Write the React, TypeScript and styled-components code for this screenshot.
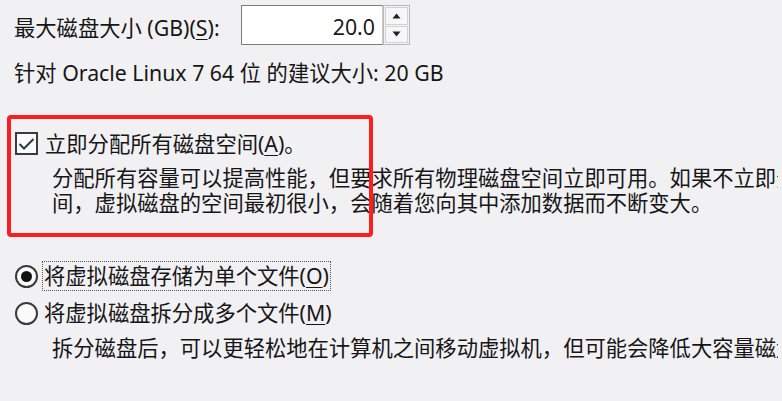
import React from 'react';
import styled, { createGlobalStyle } from 'styled-components';

const GlobalStyle = createGlobalStyle`
  html, body {
    margin: 0;
    padding: 0;
    background: #f1f0f3;
    overflow: hidden;
  }
  body {
    font-family: "Noto Sans", "Noto Sans CJK SC", sans-serif;
    color: #161616;
  }
`;

const Page = styled.div`
  width: 782px;
  height: 401px;
  box-sizing: border-box;
  padding: 5px 0 0 14px;
  font-size: 21.3px;
  line-height: 25px;
  white-space: nowrap;
  overflow: hidden;
  border-left: 4px solid #f7f7f8;
  margin-left: -4px;
`;

const SizeRow = styled.div`
  display: flex;
  align-items: center;
  height: 40px;
`;

const SizeLabel = styled.span`
  width: 227px;
  padding-top: 4px;
`;

const Key = styled.u`
  text-underline-offset: 3px;
  text-decoration-thickness: 1px;
`;

const SpinInput = styled.input`
  width: 142px;
  height: 40px;
  box-sizing: border-box;
  border: 1px solid #7c7c7c;
  border-right-color: #c8c8c8;
  background: #fff;
  text-align: right;
  padding: 2px 7px 0 0;
  font: inherit;
  color: #1a1a1a;
  outline: none;
`;

const Spinner = styled.div`
  width: 27px;
  height: 40px;
  box-sizing: border-box;
  border: 1px solid #b9b9bc;
  background: #f4f4f5;
  display: flex;
  flex-direction: column;
  padding: 1px;
  gap: 1px;
`;

const SpinButton = styled.div`
  flex: 1;
  display: flex;
  align-items: center;
  justify-content: center;
  border: 1px solid #d2d2d5;
  background: #f7f7f8;
`;

const Hint = styled.div`
  margin-top: 15px;
`;

const Section = styled.div`
  position: relative;
  margin-top: 30px;
  padding-top: 16px;
`;

const Annotation = styled.div`
  position: absolute;
  top: 0;
  left: -7px;
  width: 366px;
  height: 122px;
  box-sizing: border-box;
  border: 4px solid #ff1e1e;
  border-radius: 4px;
  pointer-events: none;
`;

const CheckRow = styled.div`
  display: flex;
  align-items: center;
  gap: 7px;
  height: 25px;
`;

const CheckBox = styled.span`
  width: 23px;
  height: 23px;
  box-sizing: border-box;
  margin-left: 1px;
  border: 2px solid #3c3c3c;
  background: #fbfbfb;
  display: flex;
  align-items: center;
  justify-content: center;
`;

const Description = styled.div<{ $gap?: number }>`
  padding-left: 38px;
  margin-top: ${p => p.$gap ?? 0}px;
`;

const RadioGroup = styled.div`
  margin-top: 46px;
  display: flex;
  flex-direction: column;
  gap: 7px;
`;

const RadioRow = styled.div`
  display: flex;
  align-items: center;
  gap: 4px;
  height: 30px;
`;

const RadioCircle = styled.span<{ $checked?: boolean }>`
  width: 23px;
  height: 23px;
  box-sizing: border-box;
  margin-left: 1px;
  border-radius: 50%;
  border: 2px solid #3a3a3a;
  background: #fbfbfb;
  display: flex;
  align-items: center;
  justify-content: center;
  &::after {
    content: '';
    width: 11px;
    height: 11px;
    border-radius: 50%;
    background: ${p => (p.$checked ? '#111' : 'transparent')};
  }
`;

const RadioLabel = styled.span<{ $focused?: boolean }>`
  height: 28px;
  line-height: 28px;
  padding: 0 1px;
  border: 1px dotted ${p => (p.$focused ? '#555' : 'transparent')};
`;

const Triangle = ({ up }: { up?: boolean }) => (
  <svg width="9" height="6" viewBox="0 0 9 6">
    <path d={up ? 'M4.5 0.5 L8.5 5.5 L0.5 5.5 Z' : 'M0.5 0.5 L8.5 0.5 L4.5 5.5 Z'} fill="#222" />
  </svg>
);

export default function App() {
  return (
    <>
      <GlobalStyle />
      <Page>
        <SizeRow>
          <SizeLabel>
            最大磁盘大小 (GB)(<Key>S</Key>):
          </SizeLabel>
          <SpinInput readOnly value="20.0" />
          <Spinner>
            <SpinButton>
              <Triangle up />
            </SpinButton>
            <SpinButton>
              <Triangle />
            </SpinButton>
          </Spinner>
        </SizeRow>
        <Hint>针对 Oracle Linux 7 64 位 的建议大小: 20 GB</Hint>

        <Section>
          <Annotation />
          <CheckRow>
            <CheckBox>
              <svg width="17" height="14" viewBox="0 0 17 14">
                <path d="M1.5 7 L6 11.5 L15.5 2" fill="none" stroke="#2a3a4c" strokeWidth="2" />
              </svg>
            </CheckBox>
            <span>
              立即分配所有磁盘空间(<Key>A</Key>)。
            </span>
          </CheckRow>
          <Description $gap={9}>
            分配所有容量可以提高性能，但要求所有物理磁盘空间立即可用。如果不立即分配所有空
          </Description>
          <Description>间，虚拟磁盘的空间最初很小，会随着您向其中添加数据而不断变大。</Description>
        </Section>

        <RadioGroup>
          <RadioRow>
            <RadioCircle $checked />
            <RadioLabel $focused>
              将虚拟磁盘存储为单个文件(<Key>O</Key>)
            </RadioLabel>
          </RadioRow>
          <RadioRow>
            <RadioCircle />
            <RadioLabel>
              将虚拟磁盘拆分成多个文件(<Key>M</Key>)
            </RadioLabel>
          </RadioRow>
        </RadioGroup>
        <Description $gap={7}>
          拆分磁盘后，可以更轻松地在计算机之间移动虚拟机，但可能会降低大容量磁盘的性能。
        </Description>
      </Page>
    </>
  );
}
